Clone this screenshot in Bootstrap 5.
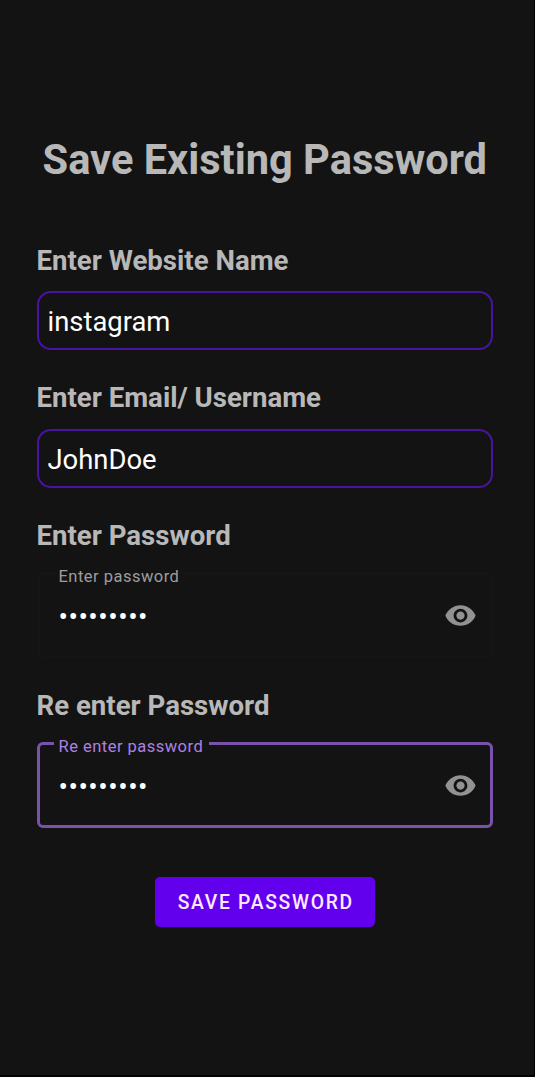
<!DOCTYPE html>
<html lang="en">
<head>
<meta charset="utf-8">
<meta name="viewport" content="width=device-width, initial-scale=1">
<title>Save Existing Password</title>
<link href="https://cdn.jsdelivr.net/npm/bootstrap@5.3.0/dist/css/bootstrap.min.css" rel="stylesheet">
<style>
  body { background: #131313; font-family: Roboto, sans-serif; color: #fff; overflow: hidden; }
  .screen { height: 1077px; padding: 135.5px 41px 0 36.5px; border: solid #000; border-width: 0 1px 2px 0; }
  .screen-title { font-size: 41.6px; line-height: 48px; font-weight: 700; color: #b8b8b8; white-space: nowrap; margin-bottom: 61px; }
  .field-title { font-size: 27.6px; line-height: 32px; font-weight: 700; color: #b8b8b8; margin-bottom: 14.5px; }
  .text-field, .text-field:focus { height: 59px; margin-bottom: 32px; padding: 3px 9px 0; font-size: 27.4px; line-height: 32px; color: #fff; background: transparent; border: 2px solid #4a13a0; border-radius: 14px; box-shadow: none; }
  .outlined { height: 94px; border: 3px solid #151515; border-radius: 6px; padding: 0 13px 0 19px; margin: -2.5px 0 32.3px; }
  .outlined legend { float: none; width: auto; height: 20px; margin: 0 0 0 -5px; padding: 0 6px 0 5px; font-size: 16.5px; line-height: 26px; letter-spacing: .48px; color: #9d9d9d; }
  .outlined.active { border-color: #7b52ab; margin-bottom: 49px; }
  .outlined.active legend { color: #ae80e2; }
  .secret, .secret:focus { flex: 1; min-width: 0; background: transparent; border: 0; outline: 0; padding: 3px 0 0; color: #fff; font-size: 28px; line-height: 30px; letter-spacing: .5px; }
  .outlined-row { height: 63px; }
  .eye { width: 33px; height: 33px; color: #929292; }
  .save { width: 220px; height: 50px; padding: 4px 0 0 2px; border: 0; border-radius: 5px; font-size: 19.3px; font-weight: 500; letter-spacing: 1.72px; color: #ffe9ff; background: #6200ee; }
  .save:hover { color: #fff; background: #6f16f2; }
</style>
</head>
<body>
<main class="screen d-flex flex-column">
  <h1 class="screen-title text-center">Save Existing Password</h1>
  <form class="d-flex flex-column">
    <label class="field-title" for="site">Enter Website Name</label>
    <input class="form-control text-field" id="site" type="text" value="instagram">
    <label class="field-title" for="user">Enter Email/ Username</label>
    <input class="form-control text-field" id="user" type="text" value="JohnDoe">
    <label class="field-title" for="pass">Enter Password</label>
    <fieldset class="outlined">
      <legend>Enter password</legend>
      <div class="outlined-row d-flex align-items-center">
        <input class="secret" id="pass" type="text" value="•••••••••">
        <svg class="eye" viewBox="0 0 24 24" fill="currentColor" aria-hidden="true"><path d="M12 4.5C7 4.5 2.73 7.61 1 12c1.73 4.39 6 7.5 11 7.5s9.270-3.110 11-7.500c-1.730-4.390-6-7.500-11-7.500zM12 17c-2.760 0-5-2.240-5-5s2.240-5 5-5 5 2.240 5 5-2.240 5-5 5zm0-8c-1.660 0-3 1.340-3 3s1.340 3 3 3 3-1.340 3-3-1.340-3-3-3z"/></svg>
      </div>
    </fieldset>
    <label class="field-title" for="again">Re enter Password</label>
    <fieldset class="outlined active">
      <legend>Re enter password</legend>
      <div class="outlined-row d-flex align-items-center">
        <input class="secret" id="again" type="text" value="•••••••••">
        <svg class="eye" viewBox="0 0 24 24" fill="currentColor" aria-hidden="true"><path d="M12 4.5C7 4.5 2.73 7.61 1 12c1.73 4.39 6 7.5 11 7.5s9.270-3.110 11-7.500c-1.730-4.390-6-7.500-11-7.500zM12 17c-2.760 0-5-2.240-5-5s2.240-5 5-5 5 2.240 5 5-2.240 5-5 5zm0-8c-1.660 0-3 1.340-3 3s1.340 3 3 3 3-1.340 3-3-1.340-3-3-3z"/></svg>
      </div>
    </fieldset>
    <button class="btn save align-self-center" type="button">SAVE PASSWORD</button>
  </form>
</main>
<script src="https://cdn.jsdelivr.net/npm/bootstrap@5.3.0/dist/js/bootstrap.bundle.min.js"></script>
</body>
</html>
